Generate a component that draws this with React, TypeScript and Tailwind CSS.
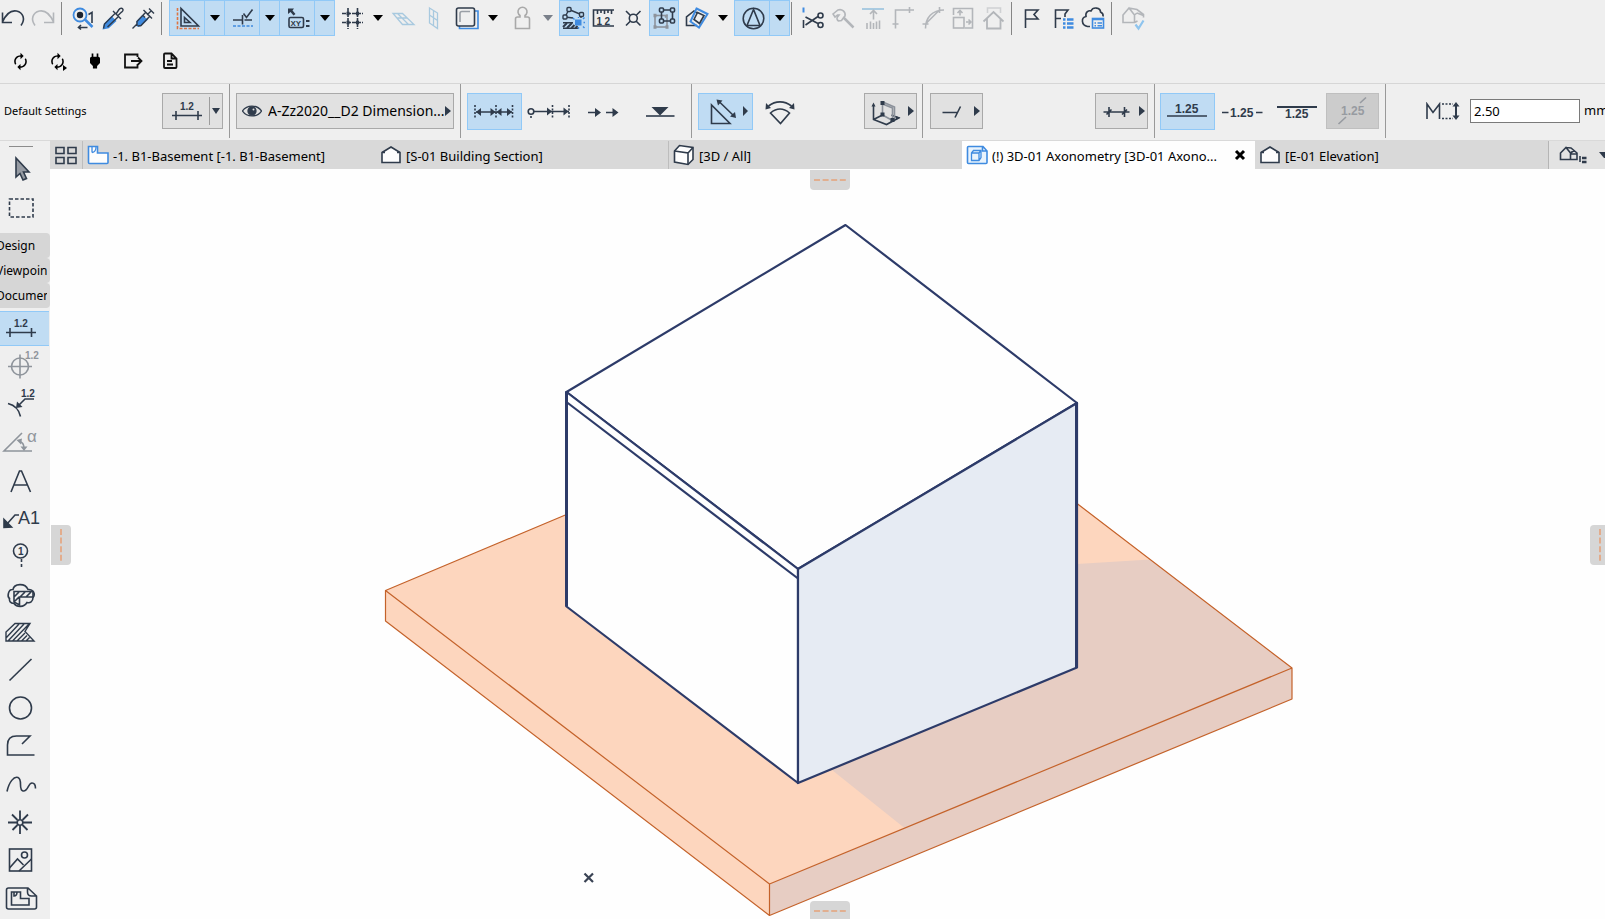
import React, { useState } from 'react';
import { MdAutorenew, MdPower } from 'react-icons/md';

const INK = '#2f3b4b';
const GREY = '#b3b6ba';
const BLUE = '#3f8be0';

type DrawingProps = {
  w?: number;
  h?: number;
  color?: string;
  sw?: number;
  children: React.ReactNode;
};

const Drawing = ({ w = 30, h = 36, color = INK, sw = 1.6, children }: DrawingProps) => (
  <svg
    width={w}
    height={h}
    viewBox={`0 0 ${w} ${h}`}
    fill="none"
    stroke={color}
    strokeWidth={sw}
    className="block shrink-0"
    aria-hidden="true"
  >
    {children}
  </svg>
);

const IconText = ({ x, y, size = 9, fill = INK, bold = true, children }: any) => (
  <text
    x={x}
    y={y}
    fontSize={size}
    fontWeight={bold ? 700 : 400}
    fontFamily="'Liberation Sans', Arial, sans-serif"
    fill={fill}
    stroke="none"
  >
    {children}
  </text>
);

const Node = ({ x, y, c = INK }: { x: number; y: number; c?: string }) => (
  <rect x={x - 2} y={y - 2} width="4" height="4" rx="1" stroke={c} fill="#c0dcf3" />
);

/* ---------- top toolbar ---------- */

const Separator = ({ tight }: { tight?: boolean }) => (
  <div className={`mr-[6px] h-[33px] w-px shrink-0 self-center bg-[#858585] ${tight ? 'ml-px' : 'ml-[3px]'}`} />
);

const ToolButton = ({ label, active, className = 'w-[30px]', children }: any) => (
  <button
    type="button"
    aria-label={label}
    aria-pressed={active ? true : undefined}
    className={`flex h-9 shrink-0 items-center justify-center ${className} ${
      active ? 'bg-[#c0dcf3] ring-1 ring-inset ring-[#91c9f7]' : ''
    }`}
  >
    {children}
  </button>
);

const Caret = ({ label, muted, active }: { label: string; muted?: boolean; active?: boolean }) => (
  <button
    type="button"
    aria-label={label}
    className={`flex h-9 shrink-0 items-center justify-center ${
      active ? '-ml-px w-[21px] bg-[#c0dcf3] ring-1 ring-inset ring-[#91c9f7]' : 'w-[22px]'
    }`}
  >
    <svg width="10" height="6" viewBox="0 0 10 6" aria-hidden="true">
      <path d="M0 0h10L5 6z" fill={muted ? '#7a808a' : '#000'} />
    </svg>
  </button>
);

const TopToolbar = () => (
  <div className="flex h-9 items-center overflow-hidden" role="toolbar" aria-label="Standard">
    <ToolButton label="Undo" className="w-7">
      <Drawing w={28}>
        <path d="M2.500 12.500v10h9.500M2.500 22C6 14 11 10 16.500 11c7 1.500 9 8.500 4.500 14.500" />
      </Drawing>
    </ToolButton>
    <ToolButton label="Redo">
      <Drawing color={GREY}>
        <path d="M25.500 12.500v10H16M25.500 22C22 14 17 10 11.500 11c-7 1.500-9 8.500-4.500 14.500" />
      </Drawing>
    </ToolButton>
    <Separator />
    <ToolButton label="Find and select">
      <Drawing>
        <circle cx="12" cy="15" r="6.500" stroke={BLUE} strokeWidth="1.800" />
        <path d="M17 19.500l7.500 7.500" stroke={BLUE} strokeWidth="2.500" />
        <circle cx="12" cy="15" r="3.200" fill="#1b2330" stroke="none" />
        <path d="M20.500 14.500l3.500-2v10.500M11 27.500h8.500M13 25l-2.500 2.500 2.500 2" />
      </Drawing>
    </ToolButton>
    <ToolButton label="Pick up parameters">
      <Drawing sw={1.4}>
        <path d="M5.500 28.500l1-4.500 7-7 4 4-7 6.500z" fill={BLUE} stroke={BLUE} />
        <path d="M5.500 28.500l1-4.500L17 13.500M9.500 27L20 17M15 11l8 8M18 14l3-4.500c1-1.500 3.500-2 4 0 .300 1.500-1 2.500-2 3l-3 3" />
      </Drawing>
    </ToolButton>
    <ToolButton label="Inject parameters">
      <Drawing sw={1.4}>
        <path d="M9 21.500l5-5 5 3-6.500 6-3 .500z" fill={BLUE} stroke={BLUE} />
        <path d="M4.500 28.500l4.500-4.500M9 26v-4.500L18 12M10 26l3-.500L22 16M15.500 10l8.500 8.500M19 15l4-4M21 8.500l5 5M15 15.500l2 2" />
      </Drawing>
    </ToolButton>
    <Separator />

    <ToolButton label="Ruler guides" active className="ml-px w-9">
      <Drawing w={36}>
        <path d="M12 8.500V26h17.500z" />
        <path d="M15.500 17.500v5h5.500z" />
        <path d="M8.500 8v20.500H30" stroke="#dd7442" strokeDasharray="3 1.500" />
      </Drawing>
    </ToolButton>
    <Caret label="Ruler guide options" active />
    <ToolButton label="Snap guides" active className="-ml-px w-9">
      <Drawing w={36}>
        <path d="M9 20h9.500M20.500 20H28M18.500 15v9.500M19.500 13.500l3 4 6-8" />
        <path d="M9 26h20" stroke={BLUE} strokeDasharray="3 1.500" />
      </Drawing>
    </ToolButton>
    <Caret label="Snap guide options" active />
    <ToolButton label="Tracker" active className="-ml-px w-9">
      <Drawing w={36}>
        <path d="M9 8.500h6l-1.500 2 3 3.500-2 1.500-3-3.500L9 14z" fill={INK} stroke="none" />
        <rect x="10" y="17.500" width="14.500" height="10" rx="1.500" />
        <IconText x={11.5} y={25.5} size={8}>XY</IconText>
        <path d="M27 21h3.500M27 26h3.500" strokeWidth="2" />
      </Drawing>
    </ToolButton>
    <Caret label="Tracker options" active />

    <ToolButton label="Grid snap" className="ml-0.5 w-[30px]">
      <Drawing>
        <path d="M11 8v21M20.500 8v21M5 13.500h21M5 22.500h21" strokeDasharray="4 1" />
        <path d="M9.500 13.500h3M19 13.500h3M9.500 22.500h3M19 22.500h3" strokeWidth="3.500" />
      </Drawing>
    </ToolButton>
    <Caret label="Grid options" />
    <ToolButton label="Editing plane">
      <Drawing color="#a8c9df" sw={1.3}>
        <path d="M4 13.500h9.500l11.500 11H13.500zM8.500 18h9.500M8.500 13.500l11 11" />
      </Drawing>
    </ToolButton>
    <ToolButton label="Vertical editing plane">
      <Drawing color="#a8c9df" sw={1.3}>
        <path d="M10.500 8l8 5v15.500l-8-5.500zM10.500 15l8 5.500M14.500 10.500v15" />
      </Drawing>
    </ToolButton>
    <ToolButton label="Trace reference" className="ml-[3px] w-[30px]">
      <Drawing>
        <path d="M22.500 11h3.500v17.500H7.500v-4" stroke={BLUE} />
        <rect x="4.500" y="8" width="18" height="18" rx="2" fill="#efefef" />
        <path d="M8 22v-8.500q0-2 2-2h8" stroke="#9a9fa6" />
      </Drawing>
    </ToolButton>
    <Caret label="Trace options" />
    <ToolButton label="Gravity" className="ml-[3px] w-[30px]">
      <Drawing color="#a9a9a9">
        <path d="M8.500 28.500V19q0-2 2-2h2.500v-1.500a4.500 4.500 0 1 1 5 0V17h2.500q2 0 2 2v9.500z" />
      </Drawing>
    </ToolButton>
    <Caret label="Gravity options" muted />

    <ToolButton label="Snap to elements" active>
      <Drawing sw={1.4}>
        <path d="M10 9.500l12 5M6 17l4-7.500M22 14.500V18M6 17l8 1" />
        <Node x={10} y={9.500} />
        <Node x={6} y={17} />
        <Node x={22.500} y={14.500} />
        <path d="M4 22.800h10M4 28.200h16" />
        <path d="M4 27l4-4M8 28l5-5M12.500 28l3-3M16.500 28l2-2" strokeWidth="2" />
        <rect x="16" y="19.500" width="6.500" height="6" fill={BLUE} stroke="none" />
        <path d="M19.500 17v1M14 18l1.500 1.500M25.500 17.500L24 19M24.500 22.500h1.500M24 26.500l1.500 1.500M19.500 27v2" stroke={BLUE} />
      </Drawing>
    </ToolButton>
    <ToolButton label="Measure">
      <Drawing>
        <path d="M25 10H4.500v16H25M8.500 10v4M12 10v3M15.500 10v4M19 10v3M22.500 10v4" />
        <IconText x={7.500} y={24.500} size={10}>1</IconText>
        <IconText x={15.500} y={24.500} size={10}>2</IconText>
      </Drawing>
    </ToolButton>
    <ToolButton label="Intersection snap">
      <Drawing>
        <path d="M7 11l4.500 4.500M21.500 11L17 15.500M7 25.500l4.500-4.500M21.500 25.500L17 21" />
        <circle cx="14.300" cy="18.300" r="4" />
      </Drawing>
    </ToolButton>
    <ToolButton label="Suspend groups" active>
      <Drawing>
        <rect x="6" y="15.500" width="12" height="11.500" stroke="#8d939c" />
        <path d="M12.500 10h11v11h-11z" />
        <path d="M16 17.500l2.500-3" stroke="#8d939c" />
        <Node x={12.500} y={10} />
        <Node x={23.500} y={10} />
        <Node x={12.500} y={21} />
        <Node x={23.500} y={21} />
        <path d="M4.500 15.500h3M4.500 27h3M16.500 27h3" stroke="#8d939c" strokeWidth="3.500" />
      </Drawing>
    </ToolButton>
    <ToolButton label="Layers" className="ml-[3px] w-[30px]">
      <Drawing>
        <path d="M15 25.500H4.500v-8.500l7.500-6 3 2" />
        <path d="M14.500 8.500l11 5.500-8.500 13.500-8.500-6z" stroke={BLUE} strokeWidth="2" />
        <path d="M15.500 12.500l6.500 3-4.500 8-5.500-4z" />
      </Drawing>
    </ToolButton>
    <Caret label="Layer options" />
    <ToolButton label="Orientation" active className="w-9">
      <Drawing w={36}>
        <circle cx="19.500" cy="18.500" r="10.300" />
        <path d="M19.500 9.500L13 25.500h13z" />
      </Drawing>
    </ToolButton>
    <Caret label="Orientation options" active />
    <Separator tight />

    <ToolButton label="Split">
      <Drawing>
        <path d="M5.500 7.500v5" stroke={BLUE} strokeWidth="2" />
        <path d="M5.500 20v8M7.500 17l12.500 6.500M7.500 25L20 16.500" />
        <circle cx="22.500" cy="15.500" r="2.500" />
        <circle cx="22.500" cy="25" r="2.500" />
      </Drawing>
    </ToolButton>
    <ToolButton label="Adjust">
      <Drawing color={GREY}>
        <path d="M5 14l5-4c4-1.500 8 2 7 6l-1 1-2.500 3.500-3 .500c-1.500-1-2-3-1-4l1.500-2H9.500L7 17z" />
        <path d="M15.500 17.500l10 10" strokeWidth="2.500" />
      </Drawing>
    </ToolButton>
    <ToolButton label="Trim to roof">
      <Drawing color={GREY}>
        <path d="M4 9h22" stroke="#aacbe1" strokeWidth="2" />
        <path d="M15.500 19.500V11M12 14l3.500-3.500L19 14M9 23v6M12.500 21.500V29M15.500 23v6M18.500 21.500V29M21.500 20.500V29" />
      </Drawing>
    </ToolButton>
    <ToolButton label="Intersect">
      <Drawing color={GREY}>
        <path d="M7.500 28.500V10H26M4.500 24h6M21.500 7v6" />
      </Drawing>
    </ToolButton>
    <ToolButton label="Fillet">
      <Drawing color={GREY}>
        <path d="M7.500 28.500C7.500 18 14 10 26 10M4.500 24h6M21.500 7v6M8 23.500L21 10.500" />
      </Drawing>
    </ToolButton>
    <ToolButton label="Resize">
      <Drawing color={GREY}>
        <path d="M5.500 15V8.500h19v19.500H17" />
        <rect x="5.500" y="17.500" width="10.500" height="10.500" />
        <path d="M12 15.500v-5M9.500 13l2.500-2.500 2.500 2.500M18 22h5M20.500 19.500L23 22l-2.500 2.500" />
      </Drawing>
    </ToolButton>
    <ToolButton label="Elevate">
      <Drawing color={GREY}>
        <path d="M9.500 13V8h13v5" stroke="#cfd1d3" />
        <path d="M5.500 21.500l10-9.500 10 9.500M9 18.500v10h13.500v-10" strokeWidth="1.800" />
      </Drawing>
    </ToolButton>
    <Separator />

    <ToolButton label="Markup">
      <Drawing>
        <path d="M7.500 28V10H20l-4 4.500 4 4.500H7.500" />
      </Drawing>
    </ToolButton>
    <ToolButton label="Issue list">
      <Drawing>
        <path d="M7.500 28V10H20l-3 4v3M7.500 18.500H13" />
        <path d="M15 19.500h2.500M19 19.500h6.500M15 23.500h2.500M19 23.500h6.500M15 27.500h2.500M19 27.500h6.500" stroke={BLUE} strokeWidth="2.500" />
      </Drawing>
    </ToolButton>
    <ToolButton label="Cloud issues">
      <Drawing>
        <path d="M12 26.500H9.500C3 25 3 17.500 8 16.500 7 12 11 10 13 11c2-4.500 9.500-3.500 9.500 1 2 1 3 2.500 2.500 4.500" />
        <rect x="14.500" y="18.500" width="11" height="9.500" stroke={BLUE} fill="#efefef" />
        <path d="M14.500 19.500h11M16.500 23h1.500M19.500 23h4.500M16.500 25.800h1.500M19.500 25.800h4.500" stroke={BLUE} />
      </Drawing>
    </ToolButton>
    <Separator />
    <ToolButton label="Model check">
      <Drawing color={GREY}>
        <path d="M16.500 22.500H5V15l6-7 5.500 7zM11 8l8 1.500 6.500 5v3M19 13l6.500 2.500M16.500 15l2.500-2M16.500 22.500l3-1.500" />
        <path d="M17.500 24.500l3 4 5-8" stroke="#8ec4ee" strokeWidth="2.200" />
      </Drawing>
    </ToolButton>
  </div>
);

const SyncToolbar = () => (
  <div className="flex h-[47px] items-center pt-[3px] text-black" role="toolbar" aria-label="Sync">
    <button type="button" aria-label="Sync" className="flex w-[38px] justify-center pl-0.5">
      <MdAutorenew size={19} />
    </button>
    <button type="button" aria-label="Sync and run" className="flex w-[38px] justify-center">
      <MdAutorenew size={19} />
      <svg width="4" height="6" viewBox="0 0 4 6" className="-ml-1 self-end" aria-hidden="true">
        <path d="M0 0v6l4-3z" />
      </svg>
    </button>
    <button type="button" aria-label="Connection" className="flex w-[38px] justify-center">
      <MdPower size={20} />
    </button>
    <button type="button" aria-label="Export" className="flex w-[38px] justify-center">
      <Drawing w={20} h={18} color="#111" sw={1.8}>
        <path d="M14.500 5V2.500H2v13h12.500V12M8 9h10.500M15 5.500L18.500 9 15 12.500" />
      </Drawing>
    </button>
    <button type="button" aria-label="Report" className="flex w-9 justify-center">
      <Drawing w={16} h={18} color="#111" sw={1.8}>
        <path d="M3 1.500h6.500l5 5v8.500q0 1-1 1H3q-1 0-1-1v-12.500q0-1 1-1zM5 9h5M5 12.500h6M9.500 1.500v5h5" />
      </Drawing>
    </button>
  </div>
);

/* ---------- info box ---------- */

const FlyoutArrow = () => (
  <svg width="6" height="10" viewBox="0 0 6 10" className="shrink-0" aria-hidden="true">
    <path d="M0 0v10l6-5z" fill={INK} />
  </svg>
);

const boxed = 'flex h-9 shrink-0 items-center border border-[#a9a9a9] bg-[#e1e1e1]';

const InfoButton = ({ label, active, children }: any) => (
  <button
    type="button"
    aria-label={label}
    className={`flex h-[37px] w-[55px] shrink-0 items-center justify-center ${
      active ? 'bg-[#c0dcf3] ring-1 ring-inset ring-[#91c9f7]' : ''
    }`}
  >
    {children}
  </button>
);

const section = 'flex h-[54px] shrink-0 items-center border-r border-[#999]';

const InfoBox = () => (
  <div className="flex h-[57px] overflow-hidden border-t border-[#d6d6d6]">
    <div className={`${section} w-[230px] justify-between pr-[6px] pl-1`}>
      <span className="text-[11px] leading-4">Default Settings</span>
      <button type="button" aria-label="Dimension defaults" className={`${boxed} w-[61px]`}>
        <Drawing w={46} h={34}>
          <path d="M9 21.500h30M13 17v9M35 17v9" />
          <IconText x={17} y={16} size={10}>1.2</IconText>
        </Drawing>
        <span className="mr-[2px] h-7 w-px bg-[#9d9d9d]" />
        <svg width="8" height="6" viewBox="0 0 8 6" aria-hidden="true">
          <path d="M0 0h8L4 6z" fill={INK} />
        </svg>
      </button>
    </div>

    <div className={`${section} w-[231px] px-[6px]`}>
      <label className={`${boxed} w-full pr-[2px] pl-[5px]`}>
        <Drawing w={20} h={16} sw={1.3}>
          <path d="M.500 8C5 1.500 15 1.500 19.500 8 15 14.500 5 14.500.500 8z" />
          <circle cx="10" cy="8" r="4" fill={INK} />
          <circle cx="11.500" cy="6.500" r="1" fill="#e1e1e1" stroke="none" />
        </Drawing>
        <select
          aria-label="Layer"
          className="ml-[6px] min-w-0 flex-1 appearance-none bg-transparent text-[14px] leading-5 outline-none"
        >
          <option>A-Zz2020__D2 Dimension...</option>
        </select>
        <FlyoutArrow />
      </label>
    </div>

    <div className={`${section} w-[231px] pl-[6px]`}>
      <InfoButton label="Linear dimension" active>
        <Drawing w={55} h={37}>
          <path d="M8 12v14M29 12v14M45.500 12v14" strokeDasharray="2 1.500" />
          <path d="M9 19h36" />
          <path d="M9 19l5-4v8zM28.500 19l-5-4v8zM29.500 19l5-4v8zM45 19l-5-4v8z" fill={INK} stroke="none" />
        </Drawing>
      </InfoButton>
      <InfoButton label="Cumulative dimension">
        <Drawing w={55} h={37}>
          <circle cx="9" cy="18.500" r="2.800" />
          <path d="M12 18.500h35" />
          <path d="M9 23v3M30.500 12v14M47 12v14" strokeDasharray="2 1.500" />
          <path d="M30 18.500l-5-4v8zM46.500 18.500l-5-4v8z" fill={INK} stroke="none" />
        </Drawing>
      </InfoButton>
      <InfoButton label="Base-line dimension">
        <Drawing w={55} h={37}>
          <path d="M11 19.500h8M29 19.500h8" />
          <path d="M24 19.500l-6-4.500v9zM41.500 19.500l-6-4.500v9z" fill={INK} stroke="none" />
        </Drawing>
      </InfoButton>
      <InfoButton label="Elevation dimension">
        <Drawing w={55} h={37}>
          <path d="M14 23h28.500" />
          <path d="M19.500 14h17L28 22.500z" fill={INK} stroke="none" />
        </Drawing>
      </InfoButton>
    </div>

    <div className={`${section} w-[231px] pr-[5px] pl-[6px]`}>
      <InfoButton label="Aligned dimension" active>
        <Drawing w={55} h={37}>
          <path d="M13.500 12v18.500H32zM20 7.500l16.500 16" />
          <path d="M18.500 6.500l6 1-4.500 5zM38 25l-1-6-5 4.500zM45 13v10l5-5z" fill={INK} stroke="none" />
        </Drawing>
      </InfoButton>
      <InfoButton label="Arc dimension">
        <Drawing w={55} h={37}>
          <path d="M15.500 13c7-5.500 16-5.500 23 0M17.500 20c6-5 13-5 19 0L27.500 30.500z" />
          <path d="M12.500 16.500l.500-6.500 5 5zM41.500 16.500l-.500-6.500-5 5z" fill={INK} stroke="none" />
        </Drawing>
      </InfoButton>
      <button type="button" aria-label="Projection plane" className={`${boxed} ml-auto w-[53px] justify-between pr-[2px] pl-1`}>
        <Drawing w={34} h={34}>
          <path d="M4.500 11v14.500l13 5 12-6.500-7-3M4.500 25.500l9-4.500" />
          <path d="M13.500 10l10 4v13M13.500 10v11l10 5.500M15 8.500l10.500 4.500v12" stroke="#8b919a" />
          <path d="M4.500 8.500l-2 4h4zM31.500 23.500l-4.500-1.500v4z" fill={INK} stroke="none" />
          <path d="M11.500 9h4M11.500 20.500h4M21.500 26h4" strokeWidth="4" />
        </Drawing>
        <FlyoutArrow />
      </button>
    </div>

    <div className={`${section} w-[232px] justify-between pr-[6px] pl-[7px]`}>
      <button type="button" aria-label="Witness line" className={`${boxed} w-[53px] justify-between pr-[2px] pl-1`}>
        <Drawing w={34} h={34}>
          <path d="M7.500 18.500H23M20 23.500l5.500-11" />
        </Drawing>
        <FlyoutArrow />
      </button>
      <button type="button" aria-label="Marker" className={`${boxed} w-[53px] justify-between pr-[2px] pl-1`}>
        <Drawing w={34} h={34}>
          <path d="M3.500 18h26M9 13v10M24.500 13v10M6.500 20.500l5-5M22 20.500l5-5" />
        </Drawing>
        <FlyoutArrow />
      </button>
    </div>

    <div className={`${section} w-[231px] pl-[5px]`}>
      <InfoButton label="Text above line" active>
        <Drawing w={55} h={37}>
          <path d="M7 23h40" />
          <IconText x={15} y={20} size={12}>1.25</IconText>
        </Drawing>
      </InfoButton>
      <InfoButton label="Text within line">
        <Drawing w={55} h={37}>
          <path d="M7 19.500h6.500M41 19.500h6.500" />
          <IconText x={15} y={24} size={12}>1.25</IconText>
        </Drawing>
      </InfoButton>
      <InfoButton label="Text below line">
        <Drawing w={55} h={37}>
          <path d="M7 14h40" strokeWidth="2" />
          <IconText x={15} y={25} size={12}>1.25</IconText>
        </Drawing>
      </InfoButton>
      <button type="button" disabled aria-label="Text on diagonal" className="ml-px flex h-9 w-[53px] items-center justify-center border border-[#bfbfbf] bg-[#ccc]">
        <Drawing w={51} h={34} color="#979ba1">
          <path d="M33 9l6-5.500M11.500 30l7.500-7" />
          <IconText x={14} y={21} size={12} fill="#979ba1">1.25</IconText>
        </Drawing>
      </button>
    </div>

    <div className="flex h-[54px] min-w-0 flex-1 items-center gap-[9px] overflow-hidden pl-[39px]">
      <Drawing w={36} h={18}>
        <path d="M2 17V2l6 8.500L14.500 2v15" />
        <path d="M17 2h11M17 16.500h11" strokeDasharray="2 1.500" />
        <path d="M31 3v12" strokeWidth="2" />
        <path d="M31 0l-3.500 4.500h7zM31 18l-3.500-4.500h7z" fill={INK} stroke="none" />
      </Drawing>
      <label className="flex shrink-0 items-center gap-1 text-[13px]">
        <input
          type="text"
          aria-label="Text height"
          defaultValue="2.50"
          className="h-6 w-[110px] border border-[#7a7a7a] bg-white px-[3px] pb-px text-[13px] leading-5 outline-none"
        />
        mm
      </label>
    </div>
  </div>
);

/* ---------- tab bar ---------- */

const HouseIcon = () => (
  <Drawing w={22} h={20} sw={1.6}>
    <path d="M2 17.500V7.500L11 2l9 5.500v10z" fill="#fdfdfd" />
    <path d="M2 7.500h3M17 7.500h3" />
  </Drawing>
);

const TABS = [
  {
    title: '-1. B1-Basement [-1. B1-Basement]',
    icon: (
      <Drawing w={22} h={20} color={BLUE}>
        <path d="M1.500 17.500v-16h9v6.500h10.500v9.500q0 1-1 1H2.500q-1 0-1-1z" fill="#fdfdfd" />
        <path d="M5 2v5.500M5 7.500Q9 7 9 2" strokeWidth="1.300" />
      </Drawing>
    ),
  },
  { title: '[S-01 Building Section]', icon: <HouseIcon /> },
  {
    title: '[3D / All]',
    icon: (
      <Drawing w={22} h={22} sw={1.6}>
        <path d="M1.500 7l5-5.500L20 3.500v12L15 20.500 1.500 18z" fill="#fdfdfd" />
        <path d="M1.500 7L15 9v11.500M15 9l5-5.500" />
      </Drawing>
    ),
  },
  {
    title: '(!) 3D-01 Axonometry [3D-01 Axono...',
    icon: (
      <Drawing w={22} h={20} color={BLUE} sw={1.6}>
        <path d="M1.500 2.500q0-1 1-1H17l4 4.500v11.500q0 1-1 1H2.500q-1 0-1-1zM16.500 1.500V6H21" fill="#e9f3fc" />
        <path d="M5.500 8l2-2.500h7.500v7L13 15.500H5.500zM5.500 8H13v7.500M13 8l2-2.500" strokeWidth="1.300" />
      </Drawing>
    ),
  },
  { title: '[E-01 Elevation]', icon: <HouseIcon /> },
];

const TabBar = () => {
  const [current, setCurrent] = useState(3);

  return (
    <div className="flex h-7 bg-[#d9d9d9]">
      <button type="button" aria-label="Tab overview" className="flex w-[33px] shrink-0 items-center justify-center border-r border-[#bdbdbd]">
        <Drawing w={24} h={20} sw={1.6}>
          <path d="M2 2.500h8v6H2zM14 2.500h8v6h-8zM2 12.500h8v6H2zM14 12.500h8v6h-8z" />
        </Drawing>
      </button>
      <div className="flex min-w-0 flex-1" role="tablist">
        {TABS.map((tab, i) => (
          <div
            key={tab.title}
            className={`flex min-w-0 flex-1 items-center pr-[9px] pl-1 ${i === 2 ? '-ml-px border-l border-[#bdbdbd]' : ''} ${
              current === i ? 'bg-[#fefefe]' : ''
            }`}
          >
            <button
              type="button"
              role="tab"
              aria-selected={current === i}
              onClick={() => setCurrent(i)}
              className="flex min-w-0 flex-1 items-center gap-1 text-left"
            >
              {tab.icon}
              <span className="truncate pt-px text-[13px] leading-5">{tab.title}</span>
            </button>
            {current === i && (
              <button type="button" aria-label="Close tab" className="ml-2 shrink-0">
                <Drawing w={12} h={12} color="#000" sw={3}>
                  <path d="M2 2l8 8M10 2l-8 8" />
                </Drawing>
              </button>
            )}
          </div>
        ))}
      </div>
      <button
        type="button"
        aria-label="View options"
        className="flex w-[57px] shrink-0 items-center justify-end gap-3 overflow-hidden border-l border-[#b5b5b5] bg-[#e3e3e3]"
      >
        <Drawing w={28} h={20} sw={1.6}>
          <path d="M1.500 14.500V8L7 2.500 11.500 8v6.500zM7 2.500l5 .500 6 5v6.500h-6.500M11.500 8l3.500-2.500M12 9h6M21 11v6" />
          <path d="M23 13h4.500M23 17h4.500" strokeWidth="2.500" />
        </Drawing>
        <svg width="6" height="6" viewBox="0 0 6 6" className="shrink-0" aria-hidden="true">
          <path d="M0 0h6v6L5 6z" fill={INK} />
        </svg>
      </button>
    </div>
  );
};

/* ---------- toolbox ---------- */

const TOOLS: { label: string; muted?: boolean; art: React.ReactNode }[] = [
  {
    label: 'Dimension',
    art: (
      <>
        <path d="M6 23.500h30M10 19v9M31.500 19v9" />
        <IconText x={14} y={18} size={10}>1.2</IconText>
      </>
    ),
  },
  {
    label: 'Level dimension',
    muted: true,
    art: (
      <>
        <circle cx="20" cy="19.500" r="8.500" />
        <path d="M8 19.500h24M20 7.500v24" />
        <IconText x={25} y={12} size={10} fill="#8f959c">1.2</IconText>
      </>
    ),
  },
  {
    label: 'Radial dimension',
    art: (
      <>
        <path d="M8 18.500c6 1.500 11 6 12.500 13M34 14h-9l-7 7" />
        <path d="M16 23l1-6.500 5.500 5.500z" fill={INK} stroke="none" />
        <IconText x={21} y={12} size={10}>1.2</IconText>
      </>
    ),
  },
  {
    label: 'Angle dimension',
    muted: true,
    art: (
      <>
        <path d="M32 28H4l18-18M19 18c3 1 5 4 5 7" />
        <path d="M16.500 17l5.500-1.500-1 6zM24 28l-3.500-4.500h7z" fill="#8f959c" stroke="none" />
        <IconText x={27} y={19} size={17} bold={false} fill="#8f959c">α</IconText>
      </>
    ),
  },
  { label: 'Text', art: <path d="M11 31l8.500-21h2L30.500 31M14 24h13" /> },
  {
    label: 'Label',
    art: (
      <>
        <path d="M7 25l8-9h4" />
        <path d="M4 28.500v-8l7.500 7.500z" fill={INK} />
        <IconText x={18} y={25} size={18} bold={false}>A1</IconText>
      </>
    ),
  },
  {
    label: 'Grid element',
    art: (
      <>
        <circle cx="20.500" cy="14" r="7" />
        <path d="M21.500 22v10" strokeDasharray="3 2" />
        <IconText x={18} y={17.500} size={10}>1</IconText>
      </>
    ),
  },
  {
    label: 'Change',
    art: (
      <>
        <path d="M14 28.500c-4 0-5-3-4.500-5C7 22 8 14 13 14.500c1-6 12-7 15 0 5-.500 8 4.500 5 8 0 4-3 6-6 5-3 5-10 5-13 1z" />
        <path d="M14 27V16.500h19V22H19.500v8zM14 22l5-5M20 22l5-5M26 22l5-5M14 27l5-5" />
      </>
    ),
  },
  {
    label: 'Fill',
    art: (
      <path d="M6 28v-9l9-8.500h15l-5 8 9 9.500zM6 25l13-14M8 28l16-17M12.500 28L29 11M17 28l8-8M21.500 28l5.500-5.500M26 28l3.500-3.500" strokeWidth="1.400" />
    ),
  },
  { label: 'Line', art: <path d="M9.500 29.500l22-21.500" /> },
  { label: 'Circle', art: <circle cx="20.500" cy="19" r="11" /> },
  { label: 'Polyline', art: <path d="M34.500 28H7.500V18q0-9 9-9H30l-8 8" /> },
  { label: 'Spline', art: <path d="M7 26.500C9 17 14 11 18 12.500c5 2 0 12 5 13.500 5 1 5-8 9-8 2.500 0 3.500 2 3.500 5.500" /> },
  {
    label: 'Hotspot',
    art: (
      <>
        <path d="M20 7.500v8.500M20 22.500V31M8 19.500h9M23 19.500h9M12 11.500l5.500 5.500M22.500 22l5 5M28 11.500L22.500 17M17.500 22l-5 5" strokeWidth="1.800" />
        <circle cx="20" cy="19.500" r="2.800" />
      </>
    ),
  },
  {
    label: 'Figure',
    art: (
      <>
        <rect x="9.500" y="8" width="22" height="22" />
        <circle cx="24.500" cy="14" r="3" />
        <path d="M9.500 27l8-9 6 6M19 30l12.500-12" />
      </>
    ),
  },
  {
    label: 'Drawing',
    art: (
      <>
        <path d="M6.500 11q0-2 2-2H28l8.500 8v11q0 2-2 2h-26q-2 0-2-2zM27.500 9v4q0 4 4 4h5" />
        <path d="M11.500 13h9v6.500h8.500v6.500H11.500zM14 13v4q3 0 3-4" />
      </>
    ),
  },
];

const Toolbox = () => {
  const [tool, setTool] = useState('Dimension');

  return (
    <div className="flex w-[50px] shrink-0 flex-col overflow-hidden" aria-label="Toolbox">
      <div className="mt-[5px] ml-[9px] h-px w-6 bg-[#8c8c8c]" />
      <button type="button" aria-label="Arrow">
        <Drawing w={50} h={43}>
          <path d="M16 11v19l4-3.500 3 6.500 3.500-1.500-3-6.500h5.500z" fill="#969ba3" />
        </Drawing>
      </button>
      <button type="button" aria-label="Marquee">
        <Drawing w={50} h={43} sw={1.6}>
          <rect x="9.500" y="9" width="23.500" height="18" strokeDasharray="3.500 2" />
        </Drawing>
      </button>
      <div className="mb-px flex flex-col">
        {['Design', 'Viewpoint', 'Document'].map((group) => (
          <button key={group} type="button" className="flex h-[25px] items-center overflow-hidden rounded-r-[4px] bg-[#d6d6d6] pr-[3px]">
            <span className="-ml-1 w-[51px] overflow-hidden text-left text-[12px] leading-5 whitespace-nowrap">{group}</span>
          </button>
        ))}
      </div>
      {TOOLS.map((t) => (
        <button
          key={t.label}
          type="button"
          aria-label={t.label}
          aria-pressed={tool === t.label}
          onClick={() => setTool(t.label)}
          className="flex h-[38px] items-center"
        >
          <span
            className={`flex h-[35px] w-[49px] items-center border-y ${
              tool === t.label ? 'border-[#91c9f7] bg-[#c0dcf3]' : 'border-transparent'
            }`}
          >
            <Drawing w={49} h={38} color={t.muted ? '#8f959c' : INK}>
              {t.art}
            </Drawing>
          </span>
        </button>
      ))}
    </div>
  );
};

/* ---------- 3D view ---------- */

const grip = 'pointer-events-auto absolute flex items-center justify-center bg-[#d6d6d6]';

const HorizontalGrip = ({ label, className }: { label: string; className: string }) => (
  <button type="button" aria-label={label} className={`${grip} left-1/2 h-5 w-10 -translate-x-1/2 ${className}`}>
    <Drawing w={34} h={2} color="#e5a27a">
      <path d="M1 1h32" strokeDasharray="6 2.600" />
    </Drawing>
  </button>
);

const VerticalGrip = ({ label, className }: { label: string; className: string }) => (
  <button type="button" aria-label={label} className={`${grip} top-1/2 h-10 w-5 -translate-y-1/2 ${className}`}>
    <Drawing w={2} h={34} color="#e5a27a">
      <path d="M1 1v32" strokeDasharray="6 2.600" />
    </Drawing>
  </button>
);

const Viewport = () => (
  <main className="relative flex-1 overflow-hidden bg-[#fefefe]">
    <svg viewBox="50 169 1555 750" className="block h-auto w-full" role="img" aria-label="3D axonometry of a box on a slab">
      {/* slab */}
      <g strokeLinejoin="round">
        <path d="M385.500 590.500L769.500 884v31.500L385.500 621z" fill="#fdd6be" />
        <path d="M769.500 884L1292 668v31L769.500 915.500z" fill="#e7cdc3" />
        <path d="M385.500 590.500L566.500 514.500 1077 503 1292 668 769.500 884z" fill="#fdd6be" />
        {/* cast shadow */}
        <path d="M832 770L1077 667V564l73-4.500L1292 668 904.500 828z" fill="#e7cdc3" />
        <path
          d="M566.500 514.500L385.500 590.500 769.500 884 1292 668 1077 503.500M385.500 590.500V621l384 294.500L1292 699v-31M769.500 884v31.500"
          fill="none"
          stroke="#c4622a"
          strokeWidth="1.200"
        />
      </g>
      {/* box */}
      <g strokeLinejoin="round" stroke="#2d3b69" strokeWidth="2.200">
        <path d="M566.500 392L845.500 225 1077 403 798 569z" fill="#fefefe" />
        <path d="M566.500 392L798 569v214L566.500 606.500z" fill="#fefefe" />
        <path d="M798 569l279-166v264.500L798 783z" fill="#e6ebf3" />
        <path d="M566.500 402L798 578.500" />
        <path d="M566.500 391.500v215M1076.500 402.500v265" strokeWidth="3" />
      </g>
      <path d="M584.500 873.500l8.500 8.500M593 873.500l-8.500 8.500" stroke="#3a4354" strokeWidth="2.200" />
    </svg>

    <div className="pointer-events-none absolute top-0 -right-[5px] -bottom-[2px] left-0">
      <HorizontalGrip label="Show top panel" className="top-px rounded-b-[4px]" />
      <HorizontalGrip label="Show bottom panel" className="bottom-0 rounded-t-[4px]" />
      <VerticalGrip label="Show left panel" className="left-px rounded-r-[4px]" />
      <VerticalGrip label="Show right panel" className="right-0 rounded-l-[4px]" />
    </div>
  </main>
);

export default function App() {
  return (
    <div className="flex min-h-screen flex-col overflow-hidden bg-[#efefef] font-['Noto_Sans',sans-serif] text-black">
      <TopToolbar />
      <SyncToolbar />
      <InfoBox />
      <div className="flex flex-1 border-t border-[#d9d9d9]">
        <Toolbox />
        <div className="flex min-w-0 flex-1 flex-col">
          <TabBar />
          <Viewport />
        </div>
      </div>
    </div>
  );
}
